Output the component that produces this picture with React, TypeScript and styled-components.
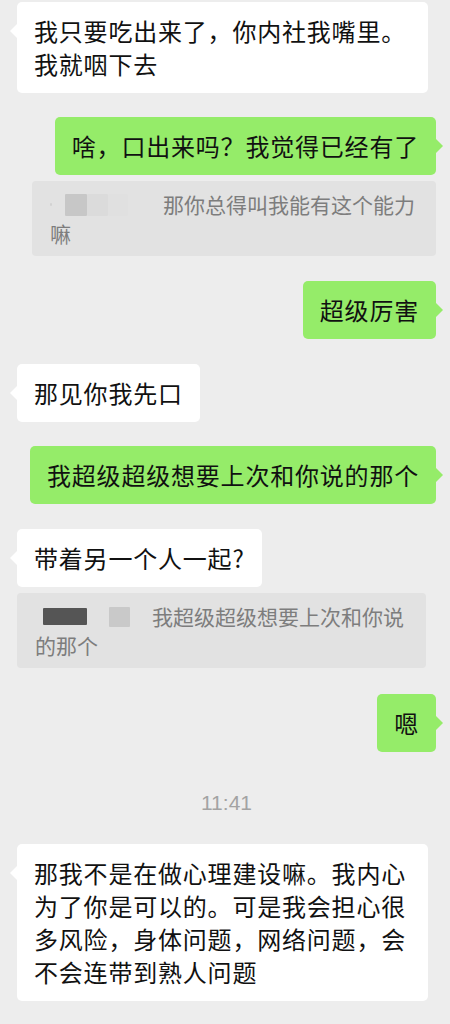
import React from "react";
import styled, { createGlobalStyle, css } from "styled-components";

type Side = "left" | "right";

const GlobalStyle = createGlobalStyle`
  html, body {
    margin: 0;
    padding: 0;
    background: #ededed;
  }
  body {
    font-family: "Noto Sans CJK SC", "Noto Sans", sans-serif;
    -webkit-font-smoothing: antialiased;
  }
`;

const Chat = styled.div`
  display: flex;
  flex-direction: column;
  padding: 2px 14px 0 17px;
  width: 450px;
  box-sizing: border-box;
`;

const Row = styled.div<{ $side: Side; $gap: number }>`
  display: flex;
  justify-content: ${(p) => (p.$side === "left" ? "flex-start" : "flex-end")};
  margin-top: ${(p) => p.$gap}px;
`;

const Bubble = styled.div<{ $side: Side }>`
  position: relative;
  box-sizing: border-box;
  max-width: 411px;
  padding: 12px 17px 13px;
  border-radius: 5px;
  font-size: 24px;
  line-height: 33px;
  letter-spacing: 0.8px;
  color: #111111;
  background: ${(p) => (p.$side === "left" ? "#ffffff" : "#95ec69")};

  /* little speech tail */
  &::before {
    content: "";
    position: absolute;
    top: 22px;
    width: 0;
    height: 0;
    border-top: 7px solid transparent;
    border-bottom: 7px solid transparent;
    ${(p) =>
      p.$side === "left"
        ? css`
            left: -7px;
            border-right: 7px solid #ffffff;
          `
        : css`
            right: -7px;
            border-left: 7px solid #95ec69;
          `}
  }
`;

const Quote = styled.div<{ $width: number }>`
  box-sizing: border-box;
  width: ${(p) => p.$width}px;
  padding: 9px 18px 8px;
  border-radius: 4px;
  background: #e2e2e2;
  color: #7d7d7d;
  font-size: 21px;
  line-height: 29px;
`;

const Redacted = styled.span<{ $width: number }>`
  display: inline-flex;
  align-items: center;
  width: ${(p) => p.$width}px;
  height: 29px;
  vertical-align: top;
`;

const Blot = styled.span<{ $w: number; $h: number; $color: string; $ml?: number }>`
  display: inline-block;
  flex: none;
  width: ${(p) => p.$w}px;
  height: ${(p) => p.$h}px;
  margin-left: ${(p) => p.$ml ?? 0}px;
  background: ${(p) => p.$color};
  border-radius: 1px;
`;

const Time = styled.div`
  margin: 36px 0 26px;
  text-align: center;
  font-family: "Liberation Sans", Arial, sans-serif;
  font-size: 21px;
  line-height: 30px;
  color: #a3a3a3;
`;

const Msg = ({
  side,
  gap,
  children,
}: {
  side: Side;
  gap: number;
  children: React.ReactNode;
}) => (
  <Row $side={side} $gap={gap}>
    <Bubble $side={side}>{children}</Bubble>
  </Row>
);

export default function App() {
  return (
    <>
      <GlobalStyle />
      <Chat>
        <Msg side="left" gap={0}>
          我只要吃出来了，你内社我嘴里。我就咽下去
        </Msg>
        <Msg side="right" gap={24}>
          啥，口出来吗？我觉得已经有了
        </Msg>
        <Row $side="right" $gap={6}>
          <Quote $width={404}>
            <Redacted $width={113}>
              <Blot $w={2} $h={3} $color="#d2d2d2" />
              <Blot $w={22} $h={22} $color="#c7c7c7" $ml={13} />
              <Blot $w={21} $h={22} $color="#dbdbdb" />
              <Blot $w={20} $h={22} $color="#e0e0e0" />
            </Redacted>
            那你总得叫我能有这个能力嘛
          </Quote>
        </Row>
        <Msg side="right" gap={25}>
          超级厉害
        </Msg>
        <Msg side="left" gap={25}>
          那见你我先口
        </Msg>
        <Msg side="right" gap={24}>
          我超级超级想要上次和你说的那个
        </Msg>
        <Msg side="left" gap={25}>
          带着另一个人一起?
        </Msg>
        <Row $side="left" $gap={6}>
          <Quote $width={409}>
            <Redacted $width={117}>
              <Blot $w={44} $h={17} $color="#555555" $ml={8} />
              <Blot $w={21} $h={20} $color="#c9c9c9" $ml={22} />
            </Redacted>
            我超级超级想要上次和你说的那个
          </Quote>
        </Row>
        <Msg side="right" gap={26}>
          嗯
        </Msg>
        <Time>11:41</Time>
        <Msg side="left" gap={0}>
          那我不是在做心理建设嘛。我内心为了你是可以的。可是我会担心很多风险，身体问题，网络问题，会不会连带到熟人问题
        </Msg>
      </Chat>
    </>
  );
}
